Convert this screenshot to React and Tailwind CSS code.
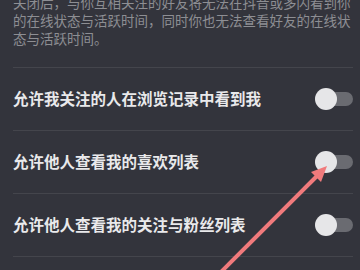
import React from "react";

const rows = [
  "允许我关注的人在浏览记录中看到我",
  "允许他人查看我的喜欢列表",
  "允许他人查看我的关注与粉丝列表",
];

function Toggle() {
  return (
    <div className="relative w-[38px] h-[22px] flex items-center shrink-0">
      <div className="absolute right-0 w-[34px] h-[14px] rounded-full bg-[#6a6b71]" />
      <div className="absolute left-0 w-[22px] h-[22px] rounded-full bg-[#e6e6e8]" />
    </div>
  );
}

export default function App() {
  return (
    <div
      className="relative w-[360px] h-[270px] overflow-hidden bg-[#33343c]"
      style={{ fontFamily: '"Noto Sans CJK SC", "Noto Sans", sans-serif' }}
    >
      <div className="pl-[13px] pr-[7px]">
        {/* description */}
        <div className="-mt-[7px] pb-[20px] text-[13.5px] leading-[18px] text-[#8d8e93] border-b border-[#44454c]">
          <p>关闭后，与你互相关注的好友将无法在抖音或多闪看到你的在线状态与活跃时间，同时你也无法查看好友的在线状态与活跃时间。</p>
        </div>

        {rows.map((label) => (
          <div
            key={label}
            className="h-[63px] flex items-center justify-between border-b border-[#44454c]"
          >
            <span className="text-[15.5px] font-bold text-[#e9e9eb]">{label}</span>
            <Toggle />
          </div>
        ))}
      </div>

      {/* annotation arrow */}
      <svg className="absolute inset-0" width="360" height="270" viewBox="0 0 360 270">
        <line x1="219" y1="274" x2="318" y2="175" stroke="#f07a7c" strokeWidth="4" strokeLinecap="round" />
        <polygon points="327,166 311,172 321,182" fill="#f07a7c" />
      </svg>
    </div>
  );
}
